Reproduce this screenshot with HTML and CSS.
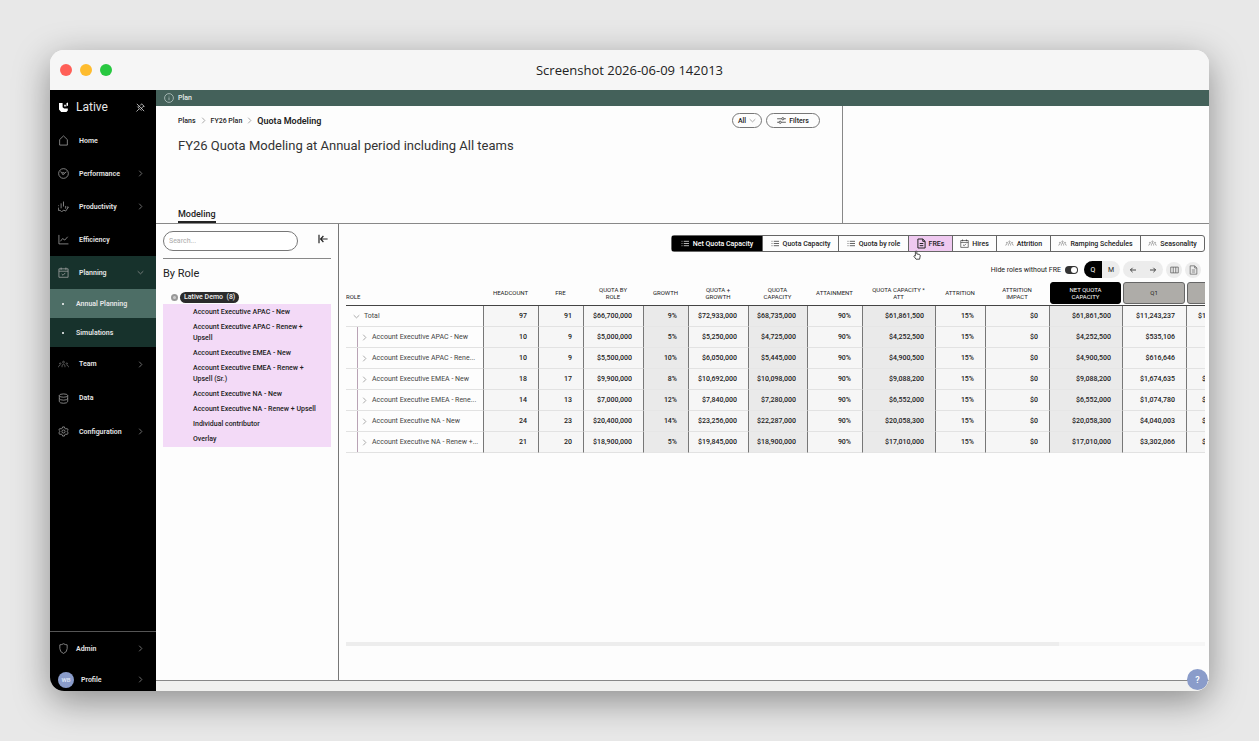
FILE: index.html
```
<!DOCTYPE html>
<html lang="en">
<head>
  <meta charset="utf-8">
  <title>Lative - Quota Modeling</title>
  <link rel="stylesheet" href="styles.css">
</head>
<body>
  <!-- shared icons -->
  <svg class="icon-defs" width="0" height="0" aria-hidden="true">
    <symbol id="i-right" viewBox="0 0 8 8"><path d="M2.5 0.8 L5.5 4 L2.5 7.2"/></symbol>
    <symbol id="i-down" viewBox="0 0 8 8"><path d="M0.8 2.5 L4 5.5 L7.2 2.5"/></symbol>
    <symbol id="i-list" viewBox="0 0 10 8"><path d="M0.5 1.5h1M3 1.5h6M0.5 4h1M3 4h6M0.5 6.5h1M3 6.5h6"/></symbol>
    <symbol id="i-people" viewBox="0 0 12 10"><circle cx="6" cy="2.4" r="1"/><circle cx="2.4" cy="4" r=".8"/><circle cx="9.6" cy="4" r=".8"/><path d="M4.4 8 V6.6 Q4.4 4.8 6 4.8 T7.6 6.6 V8M0.6 8 V7.2 Q0.8 6 2.4 6M11.4 8 V7.2 Q11.2 6 9.6 6"/></symbol>
    <symbol id="i-doc" viewBox="0 0 10 12"><path d="M1 1 H6.4 L9 3.6 V11 H1 Z M6.4 1 V3.6 H9 M3 6h4M3 8.4h4"/></symbol>
    <symbol id="i-cal" viewBox="0 0 12 12"><path d="M1 2h10v9.2H1zM1 4.6h10M3.4 .6v2.4M8.6 .6v2.4M4 7.6l1.5 1.4L8 6.4"/></symbol>
  </svg>

  <div class="window">
    <div class="titlebar">
      <div class="lights">
        <span class="light red"></span>
        <span class="light yellow"></span>
        <span class="light green"></span>
      </div>
      <div class="window-title">Screenshot 2026-06-09 142013</div>
    </div>

    <div class="app">
      <nav class="sidebar">
        <div class="brand">
          <svg class="brand-logo" viewBox="0 0 11 11"><path d="M1 1 H4.6 V5.2 L6.2 6.6 H9.8 V8.4 L8.4 10 H3.2 L1 7.6 Z"/><path d="M6.2 2.8 H7.8 V4.6 H6.2 Z M8.4 1.2 L10 .6 V3.6 L8.6 4.6 Z"/></svg>
          <span class="brand-name">Lative</span>
          <button class="pin" aria-label="Unpin menu"><svg class="icon" viewBox="0 0 12 12"><path d="M2 2 L10 10 M1.6 10.4 L4.4 7.6 M2.6 5 L7 9.4 M3.6 5.4 L5 4.6 M7.2 7.4 L7.2 6.4 L9.8 4.6 M5.8 3.8 L7.2 2 L10.4 5"/></svg></button>
        </div>
        <a class="nav-item" href="#"><svg class="icon" viewBox="0 0 12 12"><path d="M1.8 5 L6 1 L10.2 5 V11 H1.8 Z"/></svg><span>Home</span></a>
        <a class="nav-item" href="#"><svg class="icon" viewBox="0 0 12 12"><circle cx="6" cy="6" r="5.3"/><path d="M2.6 4 L4.6 5.2 M6.6 6 L9.2 4.2"/><circle cx="5.6" cy="6" r="1.1"/></svg><span>Performance</span><svg class="arrow"><use href="#i-right"/></svg></a>
        <a class="nav-item" href="#"><svg class="icon" viewBox="0 0 12 12"><path d="M6 .6V6M3.4 2.6V8M8.4 5.4V8.4M.4 7.2V10.2H2.2L4 11.6L6.4 10L8.4 11L11.4 6.6M11.4 6.6H9.8M.6 4.8v.8"/></svg><span>Productivity</span><svg class="arrow"><use href="#i-right"/></svg></a>
        <a class="nav-item" href="#"><svg class="icon" viewBox="0 0 12 12"><path d="M1 1 V10.8 H11.4 M2.6 8 L5 5 L7.4 6.6 L10.6 3"/></svg><span>Efficiency</span></a>
        <div class="nav-group">
          <a class="nav-item" href="#"><svg class="icon"><use href="#i-cal"/></svg><span>Planning</span><svg class="arrow"><use href="#i-down"/></svg></a>
          <a class="sub-item active" href="#">Annual Planning</a>
          <a class="sub-item" href="#">Simulations</a>
        </div>
        <a class="nav-item tall" href="#"><svg class="icon dim"><use href="#i-people"/></svg><span>Team</span><svg class="arrow"><use href="#i-right"/></svg></a>
        <a class="nav-item tall" href="#"><svg class="icon" viewBox="0 0 12 12"><ellipse cx="6" cy="2.8" rx="4.6" ry="1.8"/><path d="M1.4 2.8V9.4Q2 11.2 6 11.2T10.6 9.4V2.8M1.4 6Q2 7.8 6 7.8T10.6 6"/></svg><span>Data</span></a>
        <a class="nav-item" href="#"><svg class="icon" viewBox="0 0 12 12"><path d="M5 1h2l.4 1.5 1.2.7 1.5-.4 1 1.7L10 5.6v.8l1.1 1.1-1 1.7-1.5-.4-1.2.7L7 11H5l-.4-1.5-1.2-.7-1.5.4-1-1.7L2 6.4v-.8L.9 4.5l1-1.7 1.5.4 1.2-.7Z"/><circle cx="6" cy="6" r="1.7"/></svg><span>Configuration</span><svg class="arrow"><use href="#i-right"/></svg></a>
        <div class="nav-bottom">
          <a class="nav-item" href="#"><svg class="icon" viewBox="0 0 12 12"><path d="M6 .8 Q8 2 10 2 V6 Q10 10 6 11.4 Q2 10 2 6 V2 Q4 2 6 .8 Z"/></svg><span>Admin</span><svg class="arrow"><use href="#i-right"/></svg></a>
          <a class="nav-item profile" href="#"><span class="avatar">WB</span><span>Profile</span><svg class="arrow"><use href="#i-right"/></svg></a>
        </div>
      </nav>

      <main class="main">
        <div class="plan-bar">
          <svg class="icon" viewBox="0 0 10 10"><circle cx="5" cy="5" r="4.4"/><path d="M5 4.4V7.2M5 2.8v.6"/></svg>
          <span>Plan</span>
        </div>

        <header class="page-head">
          <div class="head-left">
            <div class="head-row">
              <div class="crumbs">
                <a href="#">Plans</a>
                <svg class="arrow"><use href="#i-right"/></svg>
                <a href="#">FY26 Plan</a>
                <svg class="arrow"><use href="#i-right"/></svg>
                <strong>Quota Modeling</strong>
              </div>
              <div class="head-buttons">
                <button class="pill">All <svg class="arrow"><use href="#i-down"/></svg></button>
                <button class="pill wide"><svg class="filter-icon" viewBox="0 0 10 8"><path d="M0 2h5M8 2h2M0 6h2M5 6h5"/><circle cx="6.5" cy="2" r="1.3"/><circle cx="3.5" cy="6" r="1.3"/></svg> Filters</button>
              </div>
            </div>
            <h1>FY26 Quota Modeling at Annual period including All teams</h1>
            <a class="tab" href="#">Modeling</a>
          </div>
          <div class="head-right"></div>
        </header>

        <div class="content">
          <aside class="roles">
            <div class="search-row">
              <input class="search" type="text" placeholder="Search..." aria-label="Search roles">
              <button class="collapse" aria-label="Collapse panel"><svg viewBox="0 0 10 10"><path d="M1 .8V9.2M9.6 5H2.6M5.4 2L2.6 5L5.4 8"/></svg></button>
            </div>
            <h2>By Role</h2>
            <div class="tree-root"><button class="minus" aria-label="Collapse tree"></button><span class="tag">Lative Demo&nbsp; (8)</span></div>
            <ul class="tree">
              <li>Account Executive APAC - New</li>
              <li>Account Executive APAC - Renew +<br>Upsell</li>
              <li>Account Executive EMEA - New</li>
              <li>Account Executive EMEA - Renew +<br>Upsell (Sr.)</li>
              <li>Account Executive NA - New</li>
              <li>Account Executive NA - Renew + Upsell</li>
              <li>Individual contributor</li>
              <li>Overlay</li>
            </ul>
          </aside>

          <section class="board">
            <div class="views">
              <button class="view selected"><svg class="small"><use href="#i-list"/></svg>Net Quota Capacity</button>
              <button class="view"><svg class="small"><use href="#i-list"/></svg>Quota Capacity</button>
              <button class="view"><svg class="small"><use href="#i-list"/></svg>Quota by role</button>
              <button class="view pink"><svg class="big"><use href="#i-doc"/></svg>FREs
                <svg class="pointer" viewBox="0 0 8 10"><path d="M2.4 5.6V1.4Q3 .4 3.8 1.4V4L6.4 4.4Q7.4 4.8 7.2 6L6.6 9.2H3L.8 6.2Q1 5.2 2.4 6Z"/></svg>
              </button>
              <button class="view"><svg class="big"><use href="#i-cal"/></svg>Hires</button>
              <button class="view"><svg class="small dim"><use href="#i-people"/></svg>Attrition</button>
              <button class="view"><svg class="small dim"><use href="#i-people"/></svg>Ramping Schedules</button>
              <button class="view"><svg class="small dim"><use href="#i-people"/></svg>Seasonality</button>
            </div>

            <div class="tools">
              <label class="hide-roles">Hide roles without FRE <input class="toggle" type="checkbox" checked></label>
              <div class="segment">
                <button class="on">Q</button><button>M</button>
              </div>
              <div class="segment arrows">
                <button aria-label="Previous"><svg viewBox="0 0 8 8"><path d="M7 4H1.4M3.6 1.8L1.4 4L3.6 6.2"/></svg></button><button aria-label="Next"><svg viewBox="0 0 8 8"><path d="M1 4H6.6M4.4 1.8L6.6 4L4.4 6.2"/></svg></button>
              </div>
              <button class="round" aria-label="Columns"><svg viewBox="0 0 10 10"><path d="M.8 1.8H9.2V8.2H.8ZM3.6 1.8V8.2M6.4 1.8V8.2"/></svg></button>
              <button class="round" aria-label="Export"><svg><use href="#i-doc"/></svg></button>
            </div>

            <div class="table-wrap">
              <table>
                <colgroup>
                  <col class="c-role"><col class="c-55"><col class="c-45"><col class="c-60"><col class="c-45"><col class="c-60"><col class="c-59"><col class="c-55"><col class="c-73"><col class="c-50"><col class="c-64"><col class="c-73"><col class="c-64"><col class="c-64">
                </colgroup>
                <thead>
                  <tr>
                    <th class="role">ROLE</th><th>HEADCOUNT</th><th>FRE</th><th>QUOTA BY<br>ROLE</th><th>GROWTH</th><th>QUOTA +<br>GROWTH</th><th>QUOTA<br>CAPACITY</th><th>ATTAINMENT</th><th>QUOTA CAPACITY *<br>ATT</th><th>ATTRITION</th><th>ATTRITION<br>IMPACT</th><th><div class="box dark">NET QUOTA<br>CAPACITY</div></th><th><div class="box">Q1</div></th><th><div class="box"></div></th>
                  </tr>
                </thead>
                <tbody>
                  <tr class="total"><th><div class="cell"><svg class="arrow"><use href="#i-down"/></svg>Total</div></th><td>97</td><td>91</td><td>$66,700,000</td><td class="shade">9%</td><td>$72,933,000</td><td class="shade">$68,735,000</td><td>90%</td><td class="shade">$61,861,500</td><td>15%</td><td>$0</td><td class="shade">$61,861,500</td><td>$11,243,237</td><td class="next">$1</td></tr>
                  <tr><th><div class="cell"><svg class="arrow"><use href="#i-right"/></svg>Account Executive APAC - New</div></th><td>10</td><td>9</td><td>$5,000,000</td><td class="shade">5%</td><td>$5,250,000</td><td class="shade">$4,725,000</td><td>90%</td><td class="shade">$4,252,500</td><td>15%</td><td>$0</td><td class="shade">$4,252,500</td><td>$535,106</td><td></td></tr>
                  <tr><th><div class="cell"><svg class="arrow"><use href="#i-right"/></svg>Account Executive APAC - Rene...</div></th><td>10</td><td>9</td><td>$5,500,000</td><td class="shade">10%</td><td>$6,050,000</td><td class="shade">$5,445,000</td><td>90%</td><td class="shade">$4,900,500</td><td>15%</td><td>$0</td><td class="shade">$4,900,500</td><td>$616,646</td><td></td></tr>
                  <tr><th><div class="cell"><svg class="arrow"><use href="#i-right"/></svg>Account Executive EMEA - New</div></th><td>18</td><td>17</td><td>$9,900,000</td><td class="shade">8%</td><td>$10,692,000</td><td class="shade">$10,098,000</td><td>90%</td><td class="shade">$9,088,200</td><td>15%</td><td>$0</td><td class="shade">$9,088,200</td><td>$1,674,635</td><td class="next small-sum">$</td></tr>
                  <tr><th><div class="cell"><svg class="arrow"><use href="#i-right"/></svg>Account Executive EMEA - Rene...</div></th><td>14</td><td>13</td><td>$7,000,000</td><td class="shade">12%</td><td>$7,840,000</td><td class="shade">$7,280,000</td><td>90%</td><td class="shade">$6,552,000</td><td>15%</td><td>$0</td><td class="shade">$6,552,000</td><td>$1,074,780</td><td class="next small-sum">$</td></tr>
                  <tr><th><div class="cell"><svg class="arrow"><use href="#i-right"/></svg>Account Executive NA - New</div></th><td>24</td><td>23</td><td>$20,400,000</td><td class="shade">14%</td><td>$23,256,000</td><td class="shade">$22,287,000</td><td>90%</td><td class="shade">$20,058,300</td><td>15%</td><td>$0</td><td class="shade">$20,058,300</td><td>$4,040,003</td><td class="next small-sum">$</td></tr>
                  <tr><th><div class="cell"><svg class="arrow"><use href="#i-right"/></svg>Account Executive NA - Renew +...</div></th><td>21</td><td>20</td><td>$18,900,000</td><td class="shade">5%</td><td>$19,845,000</td><td class="shade">$18,900,000</td><td>90%</td><td class="shade">$17,010,000</td><td>15%</td><td>$0</td><td class="shade">$17,010,000</td><td>$3,302,066</td><td class="next small-sum">$</td></tr>
                </tbody>
              </table>
            </div>
            <div class="scroll-track"><div class="scroll-thumb"></div></div>
          </section>
        </div>
        <footer class="foot"></footer>
      </main>
      <button class="help">?</button>
    </div>
  </div>
</body>
</html>
```
FILE: styles.css
```
* {
  box-sizing: border-box;
}

body {
  margin: 0;
  padding: 50px;
  height: 100vh;
  background: #e8e8e8;
  font-family: Roboto, "Liberation Sans", sans-serif;
  font-size: 7px;
  color: #222;
}

a {
  color: inherit;
  text-decoration: none;
}

button {
  font: inherit;
  color: inherit;
  background: none;
  border: 0;
  padding: 0;
  cursor: pointer;
}

svg {
  fill: none;
  stroke: currentColor;
  stroke-width: 0.8;
  flex: none;
}

.icon-defs {
  position: absolute;
}

.window {
  display: flex;
  flex-direction: column;
  height: 100%;
  border-radius: 14px;
  overflow: hidden;
  background: #fdfdfd;
  box-shadow: 0 10px 36px rgba(0, 0, 0, 0.4);
}

.titlebar {
  display: grid;
  grid-template-columns: 1fr auto 1fr;
  align-items: center;
  height: 40px;
  padding: 0 10px;
  background: #f6f6f6;
  flex: none;
}

.lights {
  display: flex;
  gap: 8px;
}

.light {
  width: 12px;
  height: 12px;
  border-radius: 50%;
}

.red { background: #ff5f57; }
.yellow { background: #febc2e; }
.green { background: #28c840; }

.window-title {
  font-family: "Open Sans", "Noto Sans", sans-serif;
  font-size: 13px;
  line-height: 18px;
  font-weight: 400;
  color: #222;
}

.app {
  position: relative;
  display: flex;
  flex: 1;
  min-height: 0;
}

/* sidebar */
.sidebar {
  display: flex;
  flex-direction: column;
  width: 106px;
  background: #000;
  color: #e6e6e6;
  font-weight: 600;
  flex: none;
}

.brand {
  display: flex;
  align-items: center;
  height: 34px;
  padding: 0 10px 0 8px;
}

.brand-logo {
  width: 11px;
  height: 11px;
  fill: #fff;
  stroke: none;
}

.brand-name {
  flex: 1;
  padding-left: 7px;
  font-size: 12px;
  font-weight: 400;
}

.pin {
  display: flex;
}

.icon {
  width: 11px;
  height: 11px;
}

.dim {
  opacity: 0.65;
}

.arrow {
  width: 7px;
  height: 7px;
  color: #888;
}

.nav-item {
  display: flex;
  align-items: center;
  height: 33px;
  padding: 0 12px 0 8px;
}

.nav-item.tall {
  height: 34px;
}

.nav-item .icon {
  margin-right: 10px;
  color: #aaa;
}

.nav-item .arrow {
  margin-left: auto;
  color: #999;
}

.nav-group {
  background: #17322c;
}

.sub-item {
  display: flex;
  align-items: center;
  height: 29px;
  padding-left: 12px;
}

.sub-item::before {
  content: "";
  width: 2px;
  height: 2px;
  margin-right: 12px;
  border-radius: 50%;
  background: #fff;
}

.sub-item.active {
  background: #4d6e66;
}

.nav-bottom {
  margin-top: auto;
  border-top: 1px solid #555;
}

.nav-bottom .icon {
  margin-right: 7px;
}

.nav-bottom .nav-item.profile {
  height: 26px;
  padding-top: 3px;
}

.avatar {
  display: flex;
  align-items: center;
  justify-content: center;
  width: 16px;
  height: 16px;
  margin-right: 7px;
  border-radius: 50%;
  background: #8a9cca;
  color: #dfe6f7;
  font-size: 6px;
}

/* header */
.main {
  display: flex;
  flex-direction: column;
  flex: 1;
  min-width: 0;
}

.plan-bar {
  display: flex;
  align-items: center;
  gap: 4px;
  height: 16px;
  padding-left: 8px;
  background: #44615a;
  color: #e8eeec;
  font-weight: 500;
  flex: none;
}

.plan-bar .icon {
  width: 10px;
  height: 10px;
  color: #b9c8c4;
}

.page-head {
  display: grid;
  grid-template-columns: 687fr 366fr;
  height: 118px;
  border-bottom: 1px solid #888;
  flex: none;
}

.head-left {
  display: flex;
  flex-direction: column;
  align-items: flex-start;
  padding: 7px 22px 0;
  border-right: 1px solid #888;
}

.head-row {
  display: flex;
  justify-content: space-between;
  align-items: center;
  align-self: stretch;
}

.crumbs {
  display: flex;
  align-items: center;
  gap: 4px;
  font-weight: 500;
}

.crumbs strong {
  font-size: 9px;
  font-weight: 600;
}

.head-buttons {
  display: flex;
  gap: 4px;
}

.pill {
  display: flex;
  align-items: center;
  justify-content: center;
  gap: 3px;
  width: 30px;
  height: 15px;
  border: 1px solid #777;
  border-radius: 8px;
  font-weight: 500;
}

.pill.wide {
  width: 54px;
}

.filter-icon {
  width: 9px;
  height: 7px;
}

h1 {
  margin: 10px 0 0;
  font-size: 13px;
  line-height: 16px;
  font-weight: 400;
  color: #333;
}

.tab {
  margin-top: auto;
  padding-bottom: 2px;
  border-bottom: 2px solid #222;
  font-size: 9px;
  font-weight: 500;
}

/* role panel */
.content {
  display: flex;
  flex: 1;
  min-height: 0;
}

.roles {
  width: 183px;
  padding: 7px 7px 0;
  border-right: 1px solid #777;
  flex: none;
}

.search-row {
  display: flex;
  justify-content: space-between;
  height: 28px;
  border-bottom: 1px solid #888;
}

.search {
  width: 135px;
  height: 20px;
  padding: 0 5px;
  border: 1px solid #777;
  border-radius: 10px;
  background: #fff;
  font: inherit;
}

.search::placeholder {
  color: #aaa;
}

.collapse {
  display: flex;
  padding: 3px 3px 0 0;
  height: 13px;
}

.collapse svg {
  width: 10px;
  height: 10px;
  stroke-width: 1.2;
}

h2 {
  margin: 7px 0 10px;
  font-size: 11px;
  line-height: 15px;
  font-weight: 400;
}

.tree-root {
  display: flex;
  align-items: center;
  gap: 2px;
  height: 13px;
  padding-left: 8px;
}

.minus {
  width: 7px;
  height: 7px;
  border: 2px solid #999;
  border-radius: 50%;
  background: #ccc;
}

.tag {
  padding: 0 4px;
  line-height: 11px;
  border-radius: 6px;
  background: #2b2b2b;
  color: #eee;
  font-weight: 500;
}

.tree {
  margin: 0;
  padding: 1px 0 0 30px;
  list-style: none;
  background: #f3daf7;
  font-weight: 500;
}

.tree li {
  padding: 2px 0;
  line-height: 11px;
}

/* board */
.board {
  display: flex;
  flex-direction: column;
  flex: 1;
  min-width: 0;
  padding: 11px 4px 0 7px;
}

.views {
  display: grid;
  grid-template-columns: 90px 76px 70px 44px 44px 54px 90px 64px;
  align-self: flex-end;
  height: 17px;
  border: 1px solid #666;
  border-radius: 3px;
}

.view {
  position: relative;
  display: flex;
  align-items: center;
  justify-content: center;
  gap: 3px;
  border-left: 1px solid #666;
  font-weight: 500;
}

.view:first-child {
  border-left: 0;
}

.view.selected {
  background: #000;
  color: #fff;
}

.view.pink {
  background: #efc9f0;
}

.small {
  width: 9px;
  height: 7px;
}

.big {
  width: 9px;
  height: 11px;
}

.view.pink .big {
  stroke-width: 1.1;
}

.pointer {
  position: absolute;
  left: 4px;
  top: 14px;
  width: 8px;
  height: 10px;
  fill: #fff;
}

.tools {
  display: flex;
  align-items: center;
  justify-content: flex-end;
  gap: 3px;
  height: 17px;
  margin: 9px 4px 0 0;
}

.hide-roles {
  display: flex;
  align-items: center;
  gap: 4px;
  margin-right: 3px;
}

.toggle {
  appearance: none;
  display: flex;
  justify-content: flex-end;
  width: 13px;
  height: 8px;
  margin: 0;
  padding: 1px;
  border-radius: 4px;
  background: #333;
}

.toggle::after {
  content: "";
  width: 6px;
  height: 6px;
  border-radius: 50%;
  background: #fff;
}

.segment {
  display: flex;
  height: 17px;
  border-radius: 9px;
  background: #ececec;
  overflow: hidden;
}

.segment button {
  display: flex;
  align-items: center;
  justify-content: center;
  width: 18px;
}

.segment .on {
  background: #000;
  color: #fff;
}

.segment.arrows button {
  width: 20px;
}

.segment svg {
  width: 8px;
  height: 8px;
}

.round {
  display: flex;
  align-items: center;
  justify-content: center;
  width: 16px;
  height: 16px;
  border-radius: 50%;
  background: #ececec;
  color: #555;
}

.round svg {
  width: 9px;
  height: 10px;
}

.table-wrap {
  overflow: hidden;
  margin-top: 3px;
}

table {
  width: 894px;
  table-layout: fixed;
  border-collapse: separate;
  border-spacing: 0;
}

.c-role { width: 137px; }
.c-45 { width: 45px; }
.c-50 { width: 50px; }
.c-55 { width: 55px; }
.c-59 { width: 59px; }
.c-60 { width: 60px; }
.c-64 { width: 64px; }
.c-73 { width: 73px; }

thead th {
  height: 25px;
  padding: 0 0 1px;
  border-bottom: 1px solid #444;
  font-size: 6px;
  line-height: 7px;
  font-weight: 400;
  text-align: center;
}

thead .role {
  padding-top: 8px;
  text-align: left;
}

.box {
  display: flex;
  align-items: center;
  justify-content: center;
  height: 22px;
  margin: 0 1px;
  border: 1px solid #666;
  border-radius: 3px;
  background: #aeaca8;
}

.box.dark {
  background: #000;
  border-color: #000;
  color: #fff;
}

tbody th,
tbody td {
  height: 21px;
  padding: 0 11px 0 0;
  border-bottom: 1px solid #e2e2e2;
  text-align: right;
  white-space: nowrap;
}

tbody td {
  border-left: 1px solid #777;
  background: #f6f6f6;
  font-weight: 500;
}

tbody td.shade {
  background: #eaeaea;
  border-bottom-color: #e6e6e6;
}

tbody td.next {
  padding-left: 11px;
  text-align: left;
}

tbody td.small-sum {
  padding-left: 15px;
}

tbody th {
  padding: 0 0 0 11px;
  font-weight: 400;
  color: #444;
}

.cell {
  display: flex;
  align-items: center;
  gap: 4px;
  height: 20px;
  padding-left: 3px;
  border-left: 1px solid #b9a3b5;
}

.total .cell {
  border: 0;
  padding: 0;
  margin-left: -4px;
}

.scroll-track {
  height: 4px;
  margin: auto 0 34px;
  background: #f6f6f6;
}

.scroll-thumb {
  width: 83%;
  height: 4px;
  background: #ededed;
}

.foot {
  height: 11px;
  border-top: 1px solid #888;
  background: #f1f1ef;
  flex: none;
}

.help {
  position: absolute;
  right: 1px;
  bottom: 1px;
  width: 21px;
  height: 21px;
  border-radius: 50%;
  background: #8a9cca;
  color: #fff;
  font-size: 9px;
  font-weight: 600;
}
```
